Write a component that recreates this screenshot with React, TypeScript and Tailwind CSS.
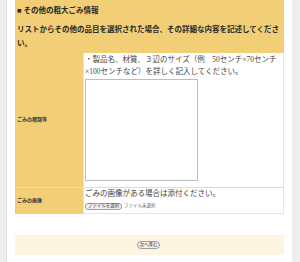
import React from "react";

const jp = { fontFamily: '"Liberation Serif", "Noto Sans CJK JP", serif' };

export default function App() {
  return (
    <div className="flex h-[262px] w-[300px] bg-[#eeeeee]" style={jp}>
      <div className="ml-[6px] flex w-[286px] flex-col border-l border-[#e2e2e2] bg-white px-[8px]">
        {/* Section header */}
        <div className="h-[53px] bg-[#f2cf76] px-[2px] text-[7.5px] font-bold text-[#2a2a2a]">
          <p className="pt-[6px] leading-[9px] whitespace-nowrap">■ その他の粗大ごみ情報</p>
          <p className="mt-[8px] leading-[14px] whitespace-nowrap">
            リストからその他の品目を選択された場合、その詳細な内容を記述してくださ
            <br />
            い。
          </p>
        </div>

        {/* Row 1 */}
        <div className="flex h-[134px]">
          <div className="flex w-[68px] items-center bg-[#f2cf76] px-[2px] text-[5px] font-bold text-[#3a3a3a]">
            ごみの種類等
          </div>
          <div className="flex-1 border-x border-[#efe6bd] bg-white pl-[1px] text-[7.5px] text-[#454545]">
            <p className="pt-[1px] leading-[12px] whitespace-nowrap">
              ・製品名、材質、３辺のサイズ（例　50センチ×70センチ
              <br />
              ×100センチなど）を詳しく記入してください。
            </p>
            <div className="mt-[1px] h-[102px] w-[113px] border border-[#bdbdbd] bg-white" />
          </div>
        </div>

        {/* Row 2 */}
        <div className="flex h-[27px] border-t border-[#f6dc96]">
          <div className="flex w-[68px] items-center bg-[#f2cf76] px-[2px] text-[5px] font-bold text-[#3a3a3a]">
            ごみの画像
          </div>
          <div className="flex-1 border-x border-b border-[#efe6bd] bg-white pl-[1px] text-[#454545]">
            <p className="text-[7.5px] leading-[12px] whitespace-nowrap">ごみの画像がある場合は添付ください。</p>
            <div className="mt-[3px] flex items-center gap-[2px]">
              <span className="flex h-[7px] w-[37px] items-center justify-center rounded-[3px] border border-[#a0a0a0] bg-[#efefef] text-[4.5px] leading-none">
                ファイルを選択
              </span>
              <span className="text-[4.5px] leading-none text-[#666]">ファイル未選択</span>
            </div>
          </div>
        </div>

        {/* Submit bar */}
        <div className="mt-[21px] flex h-[20px] items-center justify-center bg-[#fdf5e1]">
          <span className="ml-[-2px] flex h-[8px] w-[23px] items-center justify-center rounded-full border border-[#a0a0a0] bg-[#f0f0f0] text-[4.5px] leading-none text-[#444]">
            次へ進む
          </span>
        </div>
      </div>
    </div>
  );
}
